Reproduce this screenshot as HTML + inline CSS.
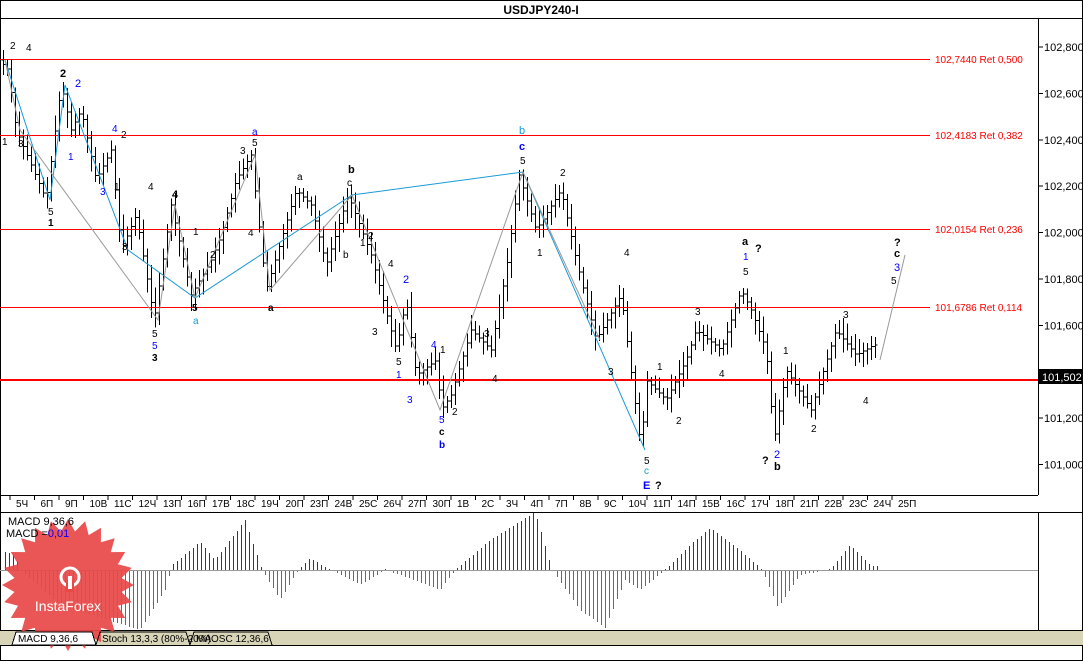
<!DOCTYPE html><html><head><meta charset="utf-8"><style>
body{margin:0;width:1083px;height:661px;overflow:hidden;background:#fff;font-family:"Liberation Sans",sans-serif}
svg text{font-family:"Liberation Sans",sans-serif}
</style></head><body>
<svg id="s" width="1083" height="661" viewBox="0 0 1083 661" xmlns="http://www.w3.org/2000/svg" shape-rendering="crispEdges">
<rect width="1083" height="661" fill="#fff"/>
<rect x="0.5" y="0.5" width="1082" height="660" fill="none" stroke="#000"/>
<line x1="0" y1="18.5" x2="1083" y2="18.5" stroke="#000"/>
<text x="541" y="14" font-size="12" font-weight="bold" text-anchor="middle">USDJPY240-I</text>
<line x1="1038.5" y1="18" x2="1038.5" y2="495" stroke="#000"/>
<line x1="0" y1="495.5" x2="1038" y2="495.5" stroke="#000"/>
<line x1="0" y1="512.5" x2="1083" y2="512.5" stroke="#000"/>
<line x1="1038.5" y1="512" x2="1038.5" y2="630" stroke="#000"/>
<rect x="0" y="630" width="1083" height="16" fill="#d8d4b8"/>
<line x1="0" y1="630.5" x2="1083" y2="630.5" stroke="#000"/>
<line x1="0" y1="645.5" x2="1083" y2="645.5" stroke="#000"/>
<rect x="0" y="59" width="930" height="1" fill="#ff0000"/>
<rect x="0" y="135" width="930" height="1" fill="#ff0000"/>
<rect x="0" y="229" width="930" height="1" fill="#ff0000"/>
<rect x="0" y="307" width="930" height="1" fill="#ff0000"/>
<rect x="0" y="379" width="1038" height="2" fill="#ff0000"/>
<g font-size="10" fill="#f00">
<text x="935" y="63">102,7440 Ret 0,500</text><text x="935" y="139">102,4183 Ret 0,382</text>
<text x="935" y="233">102,0154 Ret 0,236</text><text x="935" y="311">101,6786 Ret 0,114</text></g>
<g id="bars" stroke="#000" stroke-width="1"></g>
<g stroke="#1a9ad6" fill="none" shape-rendering="auto"><polyline points="5,60 50,200 65,85 128,250 195,298 352,195 523,172 645,450"/></g>
<g stroke="#999" fill="none" shape-rendering="auto"><polyline points="5,60 20,130 158,320 175,205 195,298 255,155 270,290 352,195 440,410 523,172 600,340"/><polyline points="880,360 905,255"/></g>
<g font-size="10" fill="#000" id="lbl">
<text x="10" y="49">2</text><text x="26" y="51">4</text><text x="2" y="145">1</text><text x="18" y="147">3</text>
<text x="60" y="77" font-weight="bold" font-size="11">2</text><text x="75" y="87" fill="#00f" font-size="11">2</text>
<text x="48" y="215">5</text><text x="48" y="226" font-weight="bold">1</text><text x="68" y="160" fill="#00f">1</text>
<text x="112" y="132" fill="#00f">4</text><text x="121" y="138">2</text><text x="100" y="195" fill="#00f">3</text><text x="114" y="190">1</text>
<text x="148" y="190">4</text><text x="172" y="198" font-weight="bold" font-size="11">4</text><text x="122" y="250">3</text>
<text x="152" y="337">5</text><text x="152" y="349" fill="#00f">5</text><text x="152" y="361" font-weight="bold">3</text>
<text x="193" y="235">1</text><text x="210" y="258">2</text><text x="192" y="311" font-weight="bold">5</text><text x="193" y="324" fill="#1a9ad6">a</text>
<text x="240" y="154">3</text><text x="252" y="135" fill="#00f">a</text><text x="252" y="146">5</text><text x="248" y="236">4</text>
<text x="268" y="311" font-weight="bold">a</text><text x="297" y="180">a</text><text x="348" y="173" font-weight="bold" font-size="11">b</text><text x="347" y="186">c</text>
<text x="360" y="246">1</text><text x="343" y="258">b</text><text x="368" y="239">2</text><text x="388" y="267">4</text><text x="403" y="283" fill="#00f" font-size="11">2</text>
<text x="372" y="335">3</text><text x="396" y="365">5</text><text x="396" y="378" fill="#00f">1</text><text x="407" y="403" fill="#00f">3</text>
<text x="431" y="348" fill="#00f">4</text><text x="440" y="353">1</text><text x="452" y="415">2</text>
<text x="439" y="423" fill="#00f">5</text><text x="439" y="435" font-weight="bold">c</text><text x="439" y="448" fill="#00f" font-weight="bold">b</text>
<text x="484" y="337">3</text><text x="492" y="382">4</text><text x="519" y="134" fill="#1a9ad6" font-size="11">b</text>
<text x="519" y="150" fill="#00f" font-weight="bold" font-size="11">c</text><text x="520" y="164">5</text><text x="537" y="256">1</text><text x="560" y="176">2</text>
<text x="624" y="256">4</text><text x="608" y="375">3</text><text x="644" y="464">5</text><text x="644" y="474" fill="#1a9ad6">c</text>
<text x="643" y="489" fill="#00f" font-weight="bold" font-size="11">E</text><text x="655" y="489" font-weight="bold" font-size="11">?</text>
<text x="657" y="370">1</text><text x="676" y="424">2</text><text x="695" y="315">3</text><text x="719" y="377">4</text>
<text x="742" y="245" font-weight="bold" font-size="11">a</text><text x="755" y="252" font-weight="bold" font-size="11">?</text>
<text x="743" y="260" fill="#00f">1</text><text x="743" y="275">5</text><text x="783" y="354">1</text>
<text x="774" y="458" fill="#00f" font-size="11">2</text><text x="762" y="464" font-weight="bold" font-size="11">?</text><text x="774" y="470" font-weight="bold" font-size="11">b</text>
<text x="811" y="432">2</text><text x="843" y="318">3</text><text x="863" y="404">4</text>
<text x="894" y="246" font-weight="bold" font-size="11">?</text><text x="894" y="257" font-weight="bold" font-size="11">c</text>
<text x="894" y="271" fill="#00f" font-size="11">3</text><text x="891" y="284">5</text></g>
<g font-size="11" fill="#000" id="pax"></g>
<rect x="1039" y="369" width="44" height="15" fill="#000"/>
<text x="1042" y="381" font-size="11" fill="#fff">101,502</text>
<g font-size="10" id="tax"></g>
<g id="macd"></g>
<polygon id="star" fill="#e84848" opacity="0.92" shape-rendering="auto"/>
<text x="8" y="525" font-size="11">MACD 9,36,6</text>
<text x="6" y="537" font-size="11">MACD =<tspan fill="#00f">0,01</tspan></text>
<text x="68" y="611" font-size="14" fill="#fff" text-anchor="middle">InstaForex</text>
<circle cx="70" cy="577" r="9" fill="none" stroke="#fff" stroke-width="3" shape-rendering="auto"/>
<rect x="66" y="580" width="8" height="12" fill="#e84848"/><rect x="68" y="576" width="4" height="13" fill="#fff"/>
<path d="M12 645 L16 632 L92 632 L96 645 Z" fill="#fff" stroke="#000"/>
<text x="18" y="642" font-size="10">MACD 9,36,6</text>
<path d="M96 645 L100 632 L186 632 L190 645" fill="none" stroke="#000"/>
<text x="102" y="642" font-size="10">Stoch 13,3,3 (80%-20%)</text>
<path d="M190 645 L194 632 L268 632 L272 645" fill="none" stroke="#000"/>
<text x="196" y="642" font-size="10">MAOSC 12,36,6</text>
</svg>
<script>
var NS="http://www.w3.org/2000/svg";
function el(p,t,a,tx){var e=document.createElementNS(NS,t);for(var k in a)e.setAttribute(k,a[k]);if(tx)e.textContent=tx;document.getElementById(p).appendChild(e);return e;}
var w=[[3,60],[12,70],[20,130],[50,200],[65,85],[75,130],[85,110],[100,180],[115,150],[125,250],[140,215],[158,320],[175,205],[195,295],[215,260],[225,235],[240,180],[255,155],[270,290],[300,190],[315,205],[330,265],[352,195],[375,255],[400,350],[410,300],[420,375],[440,360],[445,410],[455,395],[475,330],[495,350],[510,270],[523,175],[540,230],[565,190],[580,260],[600,340],[625,295],[645,450],[650,380],[670,400],[690,360],[700,330],[725,350],[745,290],[755,310],[770,350],[778,440],[790,370],[815,410],[840,330],[860,355],[878,345]];
function iy(x,a){for(var i=0;i<a.length-1;i++)if(x>=a[i][0]&&x<=a[i+1][0]){var t=(x-a[i][0])/(a[i+1][0]-a[i][0]);return a[i][1]+t*(a[i+1][1]-a[i][1]);}return a[a.length-1][1];}
var seed=7;function r(){seed=(seed*9301+49297)%233280;return seed/233280;}
for(var x=3;x<=878;x+=4){var y=iy(x,w),n=iy(x+4,w);var hi=Math.min(y,n)-4-r()*12,lo=Math.max(y,n)+4+r()*12;
el('bars','line',{x1:x+.5,y1:hi,x2:x+.5,y2:lo});el('bars','line',{x1:x-1.5,y1:y,x2:x+.5,y2:y});el('bars','line',{x1:x+.5,y1:n,x2:x+2.5,y2:n});}
var pv=["102,800","102,600","102,400","102,200","102,000","101,800","101,600","101,400","101,200","101,000"];
for(var i=0;i<10;i++){var yy=47+i*46.4;el('pax','line',{x1:1038,y1:yy,x2:1043,y2:yy,stroke:'#000'});if(i!=7)el('pax','text',{x:1044,y:yy+4},pv[i]);}
var tl="5Ч 6П 9П 10В 11С 12Ч 13П 16П 17В 18С 19Ч 20П 23П 24В 25С 26Ч 27П 30П 1В 2С 3Ч 4П 7П 8В 9С 10Ч 11П 14П 15В 16С 17Ч 18П 21П 22В 23С 24Ч 25П".split(' ');
for(var i=0;i<tl.length;i++){var xx=10+i*24.5;el('tax','line',{x1:xx,y1:495,x2:xx,y2:500,stroke:'#000'});el('tax','text',{x:xx+6,y:507},tl[i]);}
var m=[[3,18],[15,15],[20,0],[60,-35],[140,-60],[165,-20],[172,5],[200,28],[215,10],[245,50],[262,0],[280,-30],[298,0],[310,12],[330,0],[360,-15],[385,0],[400,-5],[440,-20],[455,0],[490,30],[535,58],[552,0],[580,-40],[605,-58],[625,-10],[640,-20],[665,0],[690,25],[710,42],[740,20],[762,0],[778,-38],[800,-5],[830,0],[850,25],[870,5],[880,3]];
for(var x=5;x<=880;x+=4){var v=Math.round(iy(x,m));if(v==0)v=1;el('macd','rect',{x:x,y:v>=0?570-v:570,width:1,height:Math.abs(v),fill:v>=0?'#2020ff':'#ff00ff'});}
el('macd','rect',{x:0,y:570,width:1038,height:1,fill:'#999'});
var p=[];for(var i=0;i<48;i++){var a=i*Math.PI/24,rr=i%2?54:66;p.push((68+rr*Math.cos(a)).toFixed(1)+','+(585+rr*Math.sin(a)).toFixed(1));}
document.getElementById('star').setAttribute('points',p.join(' '));
</script></body></html>
